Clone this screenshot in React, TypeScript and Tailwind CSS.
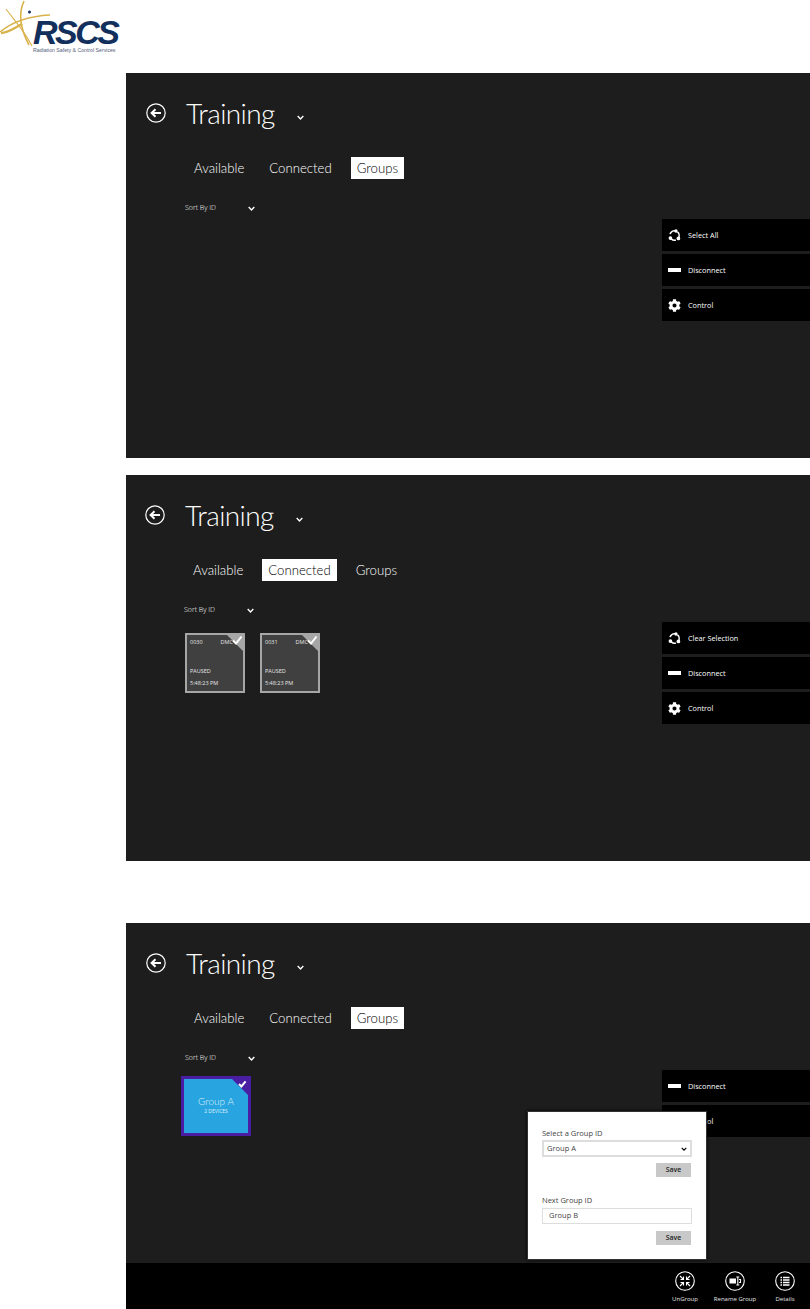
import type { ReactNode } from "react";
import { FaCog } from "react-icons/fa";

const tabs = ["Available", "Connected", "Groups"];

function Chevron({ className = "" }: { className?: string }) {
    return (
        <svg viewBox="0 0 10 7" className={className} fill="none" stroke="currentColor" strokeWidth="2">
            <path d="M1 1.5 5 5.5 9 1.5" />
        </svg>
    );
}

function BackIcon() {
    return (
        <svg viewBox="0 0 20 20" className="w-5 h-5 text-white" fill="none" stroke="currentColor">
            <circle cx="10" cy="10" r="9.2" strokeWidth="1.2" />
            <path d="M15 10H6M9.5 6.2 5.6 10l3.9 3.8" strokeWidth="2" />
        </svg>
    );
}

function SelectIcon() {
    return (
        <svg viewBox="0 0 14 14" className="w-[13px] h-[13px] text-white" fill="none" stroke="currentColor">
            <circle cx="7" cy="7" r="5" strokeWidth="1.7" strokeDasharray="7.5 2.97" transform="rotate(-50 7 7)" />
            <circle cx="8.6" cy="2.2" r="1.8" fill="currentColor" stroke="none" />
            <circle cx="2.6" cy="9.8" r="2" fill="currentColor" stroke="none" />
            <circle cx="11.2" cy="10.2" r="2" fill="currentColor" stroke="none" />
        </svg>
    );
}

function ActionRow({ icon, label }: { icon: ReactNode; label: string }) {
    return (
        <div className="h-8 bg-black flex items-center text-white">
            <div className="w-[13px] ml-[6px] flex justify-center">{icon}</div>
            <span className="ml-[7px] mt-px text-[7.3px]">{label}</span>
        </div>
    );
}

const selectAction = (label: string) => <ActionRow icon={<SelectIcon />} label={label} />;
const disconnectAction = <ActionRow icon={<div className="w-[13px] h-1 bg-white" />} label="Disconnect" />;
const controlAction = <ActionRow icon={<FaCog className="text-[13px]" />} label="Control" />;

function Tile({ id }: { id: string }) {
    return (
        <div className="relative w-[60px] h-[60px] bg-[#404040] border-2 border-[#a6a6a6] text-[#e6e6e6] text-[5.5px] leading-[8px] px-[3px]">
            <div className="flex justify-between pt-[3px] pr-[7px]">
                <span>{id}</span>
                <span>DMC</span>
            </div>
            <div className="mt-[21px]">PAUSED</div>
            <div className="mt-1">5:48:23 PM</div>
            <svg viewBox="0 0 20 20" className="absolute -top-[1px] -right-[1px] w-5 h-5">
                <path d="M2 0H20V18Z" fill="#a6a6a6" />
                <path d="M9 6.5 12 9.5 17.5 2.5" fill="none" stroke="#fff" strokeWidth="2" />
            </svg>
        </div>
    );
}

function GroupTile() {
    return (
        <div className="relative w-[70px] h-[60px] bg-[#28a4e0] border-[3px] border-[#4a1ea3] text-[#dff2fb] flex flex-col items-center justify-center pb-[3px]">
            <div className="text-[10px] leading-[13px] font-light font-['Lato',sans-serif]">Group A</div>
            <div className="text-[5px] leading-[6px]">2 DEVICES</div>
            <svg viewBox="0 0 16 16" className="absolute top-0 right-0 w-4 h-4">
                <path d="M0 0H16V16Z" fill="#4a1ea3" />
                <path d="M7 5 9.4 7.4 13.6 2.4" fill="none" stroke="#fff" strokeWidth="2" />
            </svg>
        </div>
    );
}

function Panel({
    active,
    offset,
    height,
    actions,
    children,
    overlay,
}: {
    active: number;
    offset: string;
    height: string;
    actions: ReactNode;
    children?: ReactNode;
    overlay?: ReactNode;
}) {
    return (
        <section className={`relative ml-[126px] bg-[#1d1d1d] flex flex-col ${height}`}>
            <div className="flex flex-1 min-h-0">
                <div className={`flex-1 ${offset}`}>
                    <header className="flex items-center h-10 mt-5 text-white">
                        <BackIcon />
                        <h1 className="ml-5 text-[28px] leading-10 font-light tracking-[-0.6px] font-['Lato',sans-serif]">
                            Training
                        </h1>
                        <Chevron className="w-[7px] h-[5px] ml-[22px] mt-2" />
                    </header>
                    <nav className="flex items-center gap-[13px] h-6 mt-[23px] ml-[42px] font-['Lato',sans-serif]">
                        {tabs.map((t, idx) => (
                            <div
                                key={t}
                                className={
                                    "h-[22px] px-[6px] text-[13.2px] leading-[22px] font-light " +
                                    (idx === active ? "bg-white text-black" : "text-white")
                                }
                            >
                                {t}
                            </div>
                        ))}
                    </nav>
                    <div className="flex items-center justify-between w-[70px] h-3 mt-[22px] ml-[39px] text-white text-[7px] font-light">
                        <span>Sort By ID</span>
                        <Chevron className="w-[7px] h-[5px]" />
                    </div>
                    {children}
                </div>
                <aside className="w-[148px] mt-[146px] flex flex-col gap-[3px]">{actions}</aside>
            </div>
            {overlay}
        </section>
    );
}

function BarItem({ icon, label }: { icon: ReactNode; label: string }) {
    return (
        <div className="w-[50px] flex flex-col items-center text-white">
            <svg viewBox="0 0 20 20" className="w-5 h-5" fill="none" stroke="currentColor">
                <circle cx="10" cy="10" r="9.3" strokeWidth="1.1" />
                {icon}
            </svg>
            <span className="mt-1 text-[6px] leading-[8px] whitespace-nowrap text-[#e6e6e6]">{label}</span>
        </div>
    );
}

function GroupDialog() {
    return (
        <div className="absolute right-[103px] bottom-[49px] w-[180px] h-[149px] bg-white border border-[#333] shadow-[0_0_3px_#000] px-[14px] text-[#444] text-[7.5px]">
            <div className="mt-[16px] leading-[10px]">Select a Group ID</div>
            <div className="mt-[2px] h-[17px] border-2 border-[#ddd] flex items-center justify-between px-[3px]">
                <span>Group A</span>
                <Chevron className="w-[6px] h-[4px] text-black" />
            </div>
            <div className="flex justify-end mt-[6px] pr-px">
                <button className="w-[35px] h-[14px] bg-[#c8c8c8] text-[#222] text-[7px] font-semibold">Save</button>
            </div>
            <div className="mt-[18px] leading-[10px]">Next Group ID</div>
            <div className="mt-[3px] h-[16px] border border-[#ddd] flex items-center pl-[6px]">Group B</div>
            <div className="flex justify-end mt-[7px] pr-px">
                <button className="w-[35px] h-[14px] bg-[#c8c8c8] text-[#222] text-[7px] font-semibold">Save</button>
            </div>
        </div>
    );
}

function Logo() {
    return (
        <div className="relative h-[73px] w-[120px]">
            <svg viewBox="0 0 120 54" className="absolute left-0 top-0 w-[120px] h-[54px]" fill="none">
                <path d="M0 32C12 22 30 16 50 15" stroke="#d9b24c" strokeWidth="1.6" />
                <path d="M1 33C8 33 14 28 22 24" stroke="#d9b24c" strokeWidth="2.4" />
                <path d="M6 9C14 20 24 30 32 46" stroke="#d9b24c" strokeWidth="1.1" />
                <path d="M24 1C18 14 21 30 29 45" stroke="#d9b24c" strokeWidth="1.6" />
                <circle cx="29.5" cy="12" r="1.5" fill="#14315c" />
            </svg>
            <div className="absolute left-[33px] top-[19px] font-['Liberation_Sans',sans-serif] font-bold italic text-[34px] leading-[26px] tracking-[-2.5px] text-[#12305b]">
                RSCS
            </div>
            <div className="absolute left-[33px] top-[48px] font-['Liberation_Sans',sans-serif] text-[5.2px] leading-[5px] whitespace-nowrap text-[#54607a]">
                Radiation Safety &amp; Control Services
            </div>
        </div>
    );
}

export default function App() {
    return (
        <div className="w-[810px] h-[1309px] bg-white overflow-hidden font-['Open_Sans',sans-serif]">
            <Logo />
            <Panel
                active={2}
                offset="pl-5"
                height="h-[385px]"
                actions={
                    <>
                        {selectAction("Select All")}
                        {disconnectAction}
                        {controlAction}
                    </>
                }
            />
            <div className="h-[17px]" />
            <Panel
                active={1}
                offset="pl-[19px]"
                height="h-[386px]"
                actions={
                    <div className="mt-px flex flex-col gap-[3px]">
                        {selectAction("Clear Selection")}
                        {disconnectAction}
                        {controlAction}
                    </div>
                }
            >
                <div className="flex gap-[15px] ml-10 mt-[17px]">
                    <Tile id="0030" />
                    <Tile id="0031" />
                </div>
            </Panel>
            <div className="h-[62px]" />
            <Panel
                active={2}
                offset="pl-5"
                height="h-[386px]"
                actions={
                    <div className="mt-px flex flex-col gap-[3px]">
                        {disconnectAction}
                        {controlAction}
                    </div>
                }
                overlay={
                    <>
                        <GroupDialog />
                        <footer className="h-[46px] bg-black flex justify-end pt-2">
                            <BarItem
                                label="UnGroup"
                                icon={
                                    <path
                                        d="M5 5 8.5 8.5M8.5 5.5V8.5H5.5M15 5 11.5 8.5M11.5 5.5V8.5H14.5M5 15 8.5 11.5M8.5 14.5V11.5H5.5M15 15 11.5 11.5M11.5 14.5V11.5H14.5"
                                        strokeWidth="1.1"
                                    />
                                }
                            />
                            <BarItem
                                label="Rename Group"
                                icon={
                                    <>
                                        <rect x="4.5" y="7.5" width="6.5" height="5" fill="currentColor" stroke="none" />
                                        <path d="M12.8 6v8M11.3 6h3M11.3 14h3M14 8.5h1.5v3H14" strokeWidth="1.1" />
                                    </>
                                }
                            />
                            <BarItem
                                label="Details"
                                icon={
                                    <>
                                        <path d="M8 6.5h6.5M8 9h6.5M8 11.5h6.5M8 14h6.5" strokeWidth="1.5" />
                                        <path d="M5.5 6.5h1.5M5.5 9h1.5M5.5 11.5h1.5M5.5 14h1.5" strokeWidth="1.5" />
                                    </>
                                }
                            />
                        </footer>
                    </>
                }
            >
                <div className="ml-[35px] mt-3">
                    <GroupTile />
                </div>
            </Panel>
        </div>
    );
}
